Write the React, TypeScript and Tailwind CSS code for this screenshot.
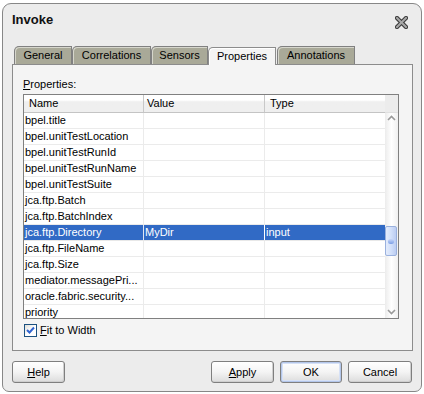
import React from "react";

const rows: { name: string; value: string; type: string; sel?: boolean }[] = [
  { name: "bpel.title", value: "", type: "" },
  { name: "bpel.unitTestLocation", value: "", type: "" },
  { name: "bpel.unitTestRunId", value: "", type: "" },
  { name: "bpel.unitTestRunName", value: "", type: "" },
  { name: "bpel.unitTestSuite", value: "", type: "" },
  { name: "jca.ftp.Batch", value: "", type: "" },
  { name: "jca.ftp.BatchIndex", value: "", type: "" },
  { name: "jca.ftp.Directory", value: "MyDir", type: "input", sel: true },
  { name: "jca.ftp.FileName", value: "", type: "" },
  { name: "jca.ftp.Size", value: "", type: "" },
  { name: "mediator.messagePri...", value: "", type: "" },
  { name: "oracle.fabric.security...", value: "", type: "" },
  { name: "priority", value: "", type: "" },
];

const tabs = [
  { label: "General", w: "w-[58px]" },
  { label: "Correlations", w: "w-[79px]" },
  { label: "Sensors", w: "w-[57px]" },
  { label: "Properties", w: "w-[68px]", sel: true },
  { label: "Annotations", w: "w-[78px] ml-px" },
];

function Btn({ children, w, def }: { children: React.ReactNode; w: string; def?: boolean }) {
  return (
    <div
      className={`${w} h-[22px] rounded-[3px] border border-[#7f7f7f] bg-gradient-to-b from-white via-[#f4f4f4] to-[#dcdcdc] flex items-center justify-center text-[11px] leading-none text-black ${
        def ? "shadow-[inset_0_0_0_1px_#b3c6ea,inset_0_0_0_2px_#d6e1f6]" : "shadow-[inset_-1px_-1px_0_#cfcfcf]"
      }`}
    >
      {children}
    </div>
  );
}

export default function App() {
  return (
    <div className="w-[424px] h-[394px] bg-white pt-[3px] pl-[2px] font-['Liberation_Sans',Arial,sans-serif] text-black">
      <div className="w-[420px] h-[389px] border border-[#878787] rounded-t-[9px] rounded-b-[7px] bg-[#ececec] flex flex-col overflow-hidden">
        {/* Title */}
        <div className="h-[42px] flex items-start justify-between shrink-0">
          <div className="pl-[9px] pt-[8px] text-[13px] leading-[15px] font-bold text-[#111]">Invoke</div>
          <div className="pr-[13px] pt-[12px]">
            <svg width="13" height="13" viewBox="0 0 13 13">
              <path d="M2 2 L11 11 M11 2 L2 11" stroke="#3a3a3a" strokeWidth="4.2" strokeLinecap="square" />
              <path d="M2 2 L11 11 M11 2 L2 11" stroke="#a8a8a8" strokeWidth="2" strokeLinecap="square" />
            </svg>
          </div>
        </div>

        {/* Tabs */}
        <div className="flex items-end ml-[11px] h-[18px] relative z-10 shrink-0">
          {tabs.map((t) =>
            t.sel ? (
              <div
                key={t.label}
                className={`${t.w} h-[18px] -mb-px border border-b-0 border-[#8c8c8c] rounded-tl-[5px] bg-[#f4f4f4] shadow-[inset_1px_1px_0_#ffffff] flex items-center justify-center text-[11px] leading-none`}
              >
                {t.label}
              </div>
            ) : (
              <div
                key={t.label}
                className={`${t.w} h-[18px] border border-b-0 border-[#808080] rounded-tl-[5px] bg-[#a9a998] shadow-[inset_1px_1px_0_#d6d6cc] flex items-center justify-center text-[11px] leading-none`}
              >
                {t.label}
              </div>
            )
          )}
        </div>

        {/* Panel */}
        <div className="ml-[9px] w-[401px] h-[287px] border border-[#8c8c8c] bg-[#f4f4f4] flex flex-col shrink-0">
          <div className="pt-[13px] pl-[10px] text-[11px] leading-[13px]">
            <span className="underline">P</span>roperties:
          </div>
          <div className="ml-[10px] mt-[3px] w-[376px] h-[225px] border border-[#808080] bg-white flex overflow-hidden">
            <div className="w-[361px] flex flex-col">
              {/* header */}
              <div className="h-[18px] flex border-b border-[#c4c4c4] bg-gradient-to-b from-white from-30% to-[#efefef] to-40% text-[11px] leading-[17px] shrink-0">
                <div className="w-[120px] border-r border-[#c8c8c8] pl-[5px]">Name</div>
                <div className="w-[121px] border-r border-[#c8c8c8] pl-[3px]">Value</div>
                <div className="w-[120px] pl-[5px]">Type</div>
              </div>
              {rows.map((r) => (
                <div
                  key={r.name}
                  className={`h-[16px] flex shrink-0 border-b text-[11px] leading-[15px] ${
                    r.sel ? "bg-[#316ac5] text-white border-[#e8e8e8]" : "border-[#ebebeb]"
                  }`}
                >
                  <div className={`w-[120px] border-r pl-px whitespace-nowrap overflow-hidden ${r.sel ? "border-[#dfe6f3]" : "border-[#ebebeb]"}`}>{r.name}</div>
                  <div className={`w-[121px] border-r pl-px ${r.sel ? "border-[#ffffff]" : "border-[#ebebeb]"}`}>{r.value}</div>
                  <div className="w-[120px] pl-px">{r.type}</div>
                </div>
              ))}
            </div>
            {/* scrollbar */}
            <div className="w-[13px] flex flex-col">
              <div className="h-[18px] bg-[#ececec] border-b border-[#e0e0e0] shrink-0" />
              <div className="flex-1 bg-gradient-to-r from-[#ececec] via-white to-[#f0f0f0] flex flex-col items-center">
                <svg width="9" height="6" viewBox="0 0 9 6" className="mt-[2px] shrink-0">
                  <path d="M1 5 L4.5 1.5 L8 5" stroke="#9a9a9a" strokeWidth="1.6" fill="none" />
                </svg>
                <div className="mt-[105px] w-[12px] h-[30px] rounded-[2px] border border-[#9ab1de] bg-gradient-to-r from-[#e4ecfb] via-[#d2e0fa] to-[#bccdf2] flex items-center justify-center self-start">
                  <div className="w-[6px] h-[5px] rounded-full bg-gradient-to-b from-[#c9d8f8] to-[#7d9fe6]" />
                </div>
                <div className="flex-1" />
                <svg width="9" height="6" viewBox="0 0 9 6" className="mb-[3px] shrink-0">
                  <path d="M1 1 L4.5 4.5 L8 1" stroke="#9a9a9a" strokeWidth="1.6" fill="none" />
                </svg>
              </div>
            </div>
          </div>
          <div className="flex items-center ml-[11px] mt-[5px] h-[13px]">
            <div className="w-[13px] h-[13px] border border-[#1c5180] bg-gradient-to-br from-[#dcdcd7] via-white to-white flex items-center justify-center">
              <svg width="9" height="9" viewBox="0 0 9 9">
                <path d="M1 4 L3.5 6.5 L8 1.5" stroke="#3164d0" strokeWidth="2" fill="none" />
              </svg>
            </div>
            <div className="ml-[3px] text-[11px] leading-[13px]">
              <span className="underline">F</span>it to Width
            </div>
          </div>
        </div>

        {/* Buttons */}
        <div className="flex items-center mt-[10px] pl-[9px] pr-[9px] shrink-0">
          <Btn w="w-[53px]">
            <span className="underline">H</span>elp
          </Btn>
          <div className="flex-1" />
          <Btn w="w-[63px]">
            <span className="underline">A</span>pply
          </Btn>
          <div className="w-[6px]" />
          <Btn w="w-[62px]" def>
            OK
          </Btn>
          <div className="w-[6px]" />
          <Btn w="w-[64px]">Cancel</Btn>
        </div>
      </div>
    </div>
  );
}
